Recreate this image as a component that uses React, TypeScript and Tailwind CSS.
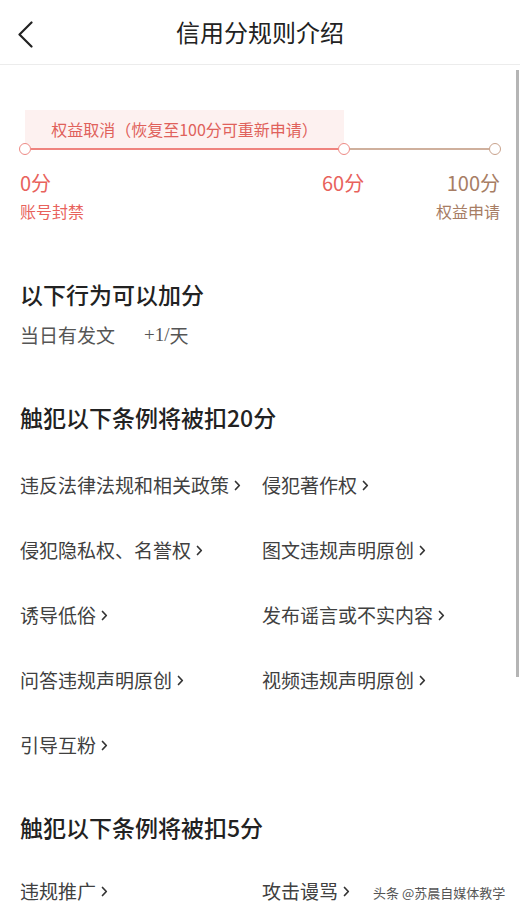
import React from 'react'

const rows: [string, string | null][] = [
  ['违反法律法规和相关政策', '侵犯著作权'],
  ['侵犯隐私权、名誉权', '图文违规声明原创'],
  ['诱导低俗', '发布谣言或不实内容'],
  ['问答违规声明原创', '视频违规声明原创'],
  ['引导互粉', null],
]

function Item({ text }: { text: string }) {
  return (
    <span className="flex items-center text-[19px] leading-[26px] text-[#404040]">
      {text}
      <svg className="ml-[5px] mt-[2px]" width="7" height="11" viewBox="0 0 7 11" fill="none">
        <path d="M1.5 1.5 L5.3 5.5 L1.5 9.5" stroke="#333" strokeWidth="1.7" strokeLinecap="round" strokeLinejoin="round" />
      </svg>
    </span>
  )
}

export default function App() {
  return (
    <div
      className="relative h-[914px] w-[520px] overflow-hidden bg-white"
      style={{ fontFamily: '"Noto Sans CJK SC", "Noto Sans", sans-serif' }}
    >
      {/* Header */}
      <div className="relative flex h-[65px] items-center justify-center border-b border-[#ececec]">
        <svg className="absolute left-[17px] top-[21px]" width="17" height="27" viewBox="0 0 17 27" fill="none">
          <path d="M14.5 1.5 L2.5 13.5 L14.5 25.5" stroke="#222" strokeWidth="2.2" strokeLinecap="round" strokeLinejoin="round" />
        </svg>
        <h1 className="text-[24px] leading-[32px] text-[#222]">信用分规则介绍</h1>
      </div>

      {/* Timeline */}
      <div className="mt-[45px] ml-[19px] w-[482px]">
        <div className="ml-[6px] flex h-[38px] w-[319px] items-center justify-center bg-[#fdf1f0] text-[16px] text-[#e0615b]">
          权益取消（恢复至100分可重新申请）
        </div>
        <div className="-mt-[5px] flex h-[12px] items-center">
          <div className="h-[12px] w-[12px] rounded-full border border-[#ee8a85] bg-white" />
          <div className="h-[2px] w-[307px] bg-[#ef837e]" />
          <div className="h-[12px] w-[12px] rounded-full border-[1.5px] border-[#ee8a85] bg-white" />
          <div className="h-[2px] flex-1 bg-[#cfb09d]" />
          <div className="h-[12px] w-[12px] rounded-full border border-[#c9a28c] bg-white" />
        </div>
      </div>
      <div className="mt-[14px] flex items-center px-[20px] text-[20px] leading-[28px]">
        <div className="w-[302px] text-[#e8625c]">0分</div>
        <div className="text-[#e8625c]">60分</div>
        <div className="flex-1 text-right text-[#a77d64]">100分</div>
      </div>
      <div className="mt-[2px] flex items-center justify-between px-[20px] text-[16px] leading-[24px]">
        <span className="text-[#e8625c]">账号封禁</span>
        <span className="text-[#a77d64]">权益申请</span>
      </div>

      {/* Bonus */}
      <div className="px-[20px]">
        <h2 className="mt-[55px] text-[23px] font-medium leading-[32px] text-[#222]">以下行为可以加分</h2>
        <div className="mt-[12px] flex items-center text-[19px] leading-[26px] text-[#555]">
          <span className="w-[124px]">当日有发文</span>
          <span style={{ fontFamily: '"Liberation Serif", "Noto Sans CJK SC", serif' }}>+1/</span>
          <span>天</span>
        </div>

        <h2 className="mt-[53px] text-[23px] font-medium leading-[32px] text-[#222]">触犯以下条例将被扣20分</h2>
        <div className="mt-[19px]">
          {rows.map(([a, b]) => (
            <div key={a} className="grid h-[65px] grid-cols-[242px_1fr] items-center">
              <Item text={a} />
              {b ? <Item text={b} /> : <span />}
            </div>
          ))}
        </div>

        <h2 className="mt-[34px] text-[23px] font-medium leading-[32px] text-[#222]">触犯以下条例将被扣5分</h2>
        <div className="mt-[15px] grid h-[65px] grid-cols-[242px_1fr] items-center">
          <Item text="违规推广" />
          <Item text="攻击谩骂" />
        </div>
      </div>

      {/* Watermark */}
      <div className="absolute left-[373px] top-[883px] text-[13px] leading-[20px] text-[#555]">头条 @苏晨自媒体教学</div>

      {/* Scrollbar */}
      <div className="absolute left-[516px] top-[70px] h-[607px] w-[3px] bg-[#b5b5b5]" />
    </div>
  )
}
